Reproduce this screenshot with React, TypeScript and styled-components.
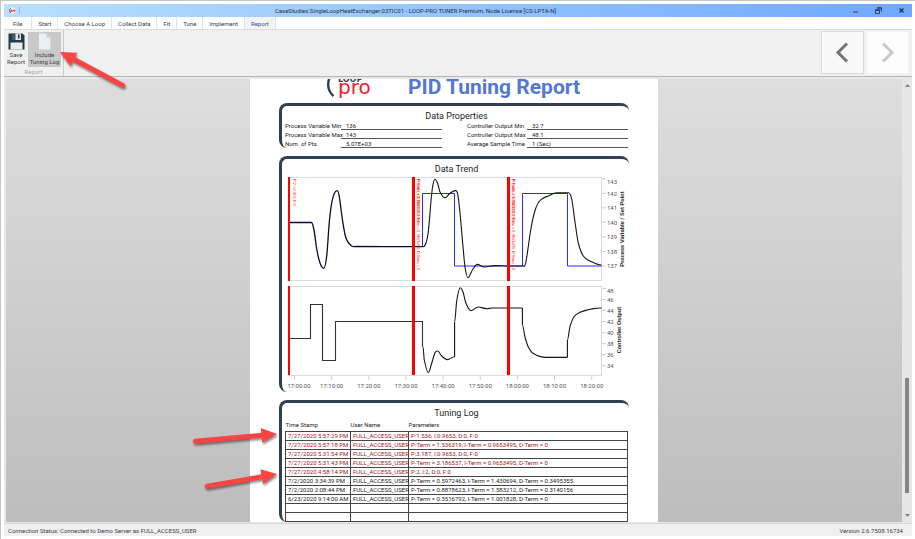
import React from "react";
import styled, { createGlobalStyle, css } from "styled-components";

const INK = "#333f52";
const RED = "#ff0000";

const GlobalStyle = createGlobalStyle`
  * { box-sizing: border-box; }
  body {
    margin: 0;
    background: #ffffff;
    color: #3c3c3c;
    font: 6px/7px Roboto, "Noto Sans", sans-serif;
  }
  button {
    margin: 0;
    padding: 0;
    border: 0;
    background: none;
    color: inherit;
    font: inherit;
  }
  svg { display: block; }
`;

const Desktop = styled.div`
  height: 100vh;
  padding: 3px;
  border-top: 1px solid #c6c6c6;
  border-left: 1px solid #c6c6c6;
`;

const AppWindow = styled.div`
  display: flex;
  flex-direction: column;
  height: 100%;
  overflow: hidden;
`;

const TitleBar = styled.header`
  display: flex;
  align-items: center;
  flex: none;
  height: 13px;
  padding: 0 5px;
  background: linear-gradient(90deg, #b9dffc, #6fa8ff);
`;

const TitleIcon = styled.span`
  padding-right: 3px;
  border-right: 1px solid #9fb9d0;
`;

const TitleText = styled.h1`
  flex: 1;
  margin: 0;
  font-size: 6px;
  font-weight: 400;
  line-height: 12px;
  text-align: center;
  color: #26303c;
`;

const WindowButtons = styled.div`
  display: flex;
  justify-content: flex-end;
  gap: 11px;
  width: 96px;
`;

const WindowButton = styled.button`
  width: 12px;
  height: 12px;
  display: grid;
  place-items: center;
`;

const TabBar = styled.nav`
  display: flex;
  flex: none;
  height: 12px;
  background: #ffffff;
`;

const Tab = styled.button<{ $active?: boolean; $first?: boolean }>`
  height: 12px;
  padding: 0 6px;
  border-right: 1px solid #e3e3e3;
  ${(p) => p.$first && css`padding: 0 9px;`}
  ${(p) => p.$active && css`background: #f3f3f3; color: #2b579a;`}
`;

const Ribbon = styled.section`
  position: relative;
  z-index: 2;
  display: flex;
  justify-content: space-between;
  flex: none;
  height: 48px;
  border-top: 1px solid #dcdcdc;
  border-bottom: 1px solid #b3b8b6;
  background: #f0f0f0;
`;

const RibbonGroup = styled.div`
  position: relative;
  padding: 2px 2px 0 2px;
  border-right: 1px solid #c9c9c9;
`;

const RibbonButtons = styled.div`
  display: flex;
  gap: 2px;
`;

const RibbonButton = styled.button<{ $pressed?: boolean }>`
  display: flex;
  flex-direction: column;
  align-items: center;
  gap: 1px;
  width: ${(p) => (p.$pressed ? 33 : 20)}px;
  height: 35px;
  padding-top: 1px;
  background: ${(p) => (p.$pressed ? "#c9c9c9" : "transparent")};
  white-space: nowrap;
`;

const GroupLabel = styled.div`
  padding-top: 1px;
  text-align: center;
  color: #a6a6a6;
`;

const NavButtons = styled.div`
  display: flex;
  gap: 2px;
  padding: 1px 3px 0 0;
`;

const NavButton = styled.button`
  display: grid;
  place-items: center;
  width: 43px;
  height: 43px;
  border: 1px solid #dadada;
  background: #f9f9f9;
  color: #747474;
  &:disabled {
    border-color: #f4f4f4;
    background: #fdfdfd;
    color: #c9c9c9;
  }
`;

const Viewer = styled.main`
  display: flex;
  flex: 1;
  min-height: 0;
  padding: 2px 0 1px 2px;
  background: #e8e8e8;
`;

const Canvas = styled.div`
  display: flex;
  justify-content: center;
  align-items: flex-start;
  flex: 1;
  height: 100%;
  overflow: hidden;
  background: linear-gradient(#dedede, #bdbdbd);
`;

const ScrollBar = styled.div`
  display: flex;
  flex-direction: column;
  align-items: center;
  width: 10px;
  padding: 5px 0;
  background: #e6e6e6;
`;

const ScrollTrack = styled.div`
  display: flex;
  flex-direction: column;
  justify-content: flex-end;
  flex: 1;
  padding-bottom: 21px;
`;

const ScrollThumb = styled.div`
  width: 4px;
  height: 115px;
  background: #868686;
`;

const StatusBar = styled.footer`
  display: flex;
  justify-content: space-between;
  align-items: center;
  flex: none;
  height: 13px;
  padding: 0 9px 0 4px;
  border-top: 1px solid #d6d6d6;
  background: #f0f0f0;
`;

const Paper = styled.article`
  flex: 0 1 408px;
  min-height: 100%;
  padding: 0 29px;
  background: #ffffff;
  color: #1c1c1c;
`;

const ReportHeader = styled.div`
  display: flex;
  align-items: flex-end;
  gap: 32px;
  height: 24px;
  padding-left: 47px;
  overflow: hidden;
`;

const ReportTitle = styled.h2`
  margin: 0;
  font-size: 21px;
  font-weight: 700;
  line-height: 32px;
  white-space: nowrap;
  color: #5377d3;
`;

const LogoTop = styled.text`
  font: 700 8px "DejaVu Sans", sans-serif;
  fill: ${INK};
`;

const LogoBottom = styled.text`
  font: 20px "DejaVu Sans", sans-serif;
  fill: #f2202c;
`;

const Card = styled.section`
  position: relative;
  margin-bottom: 8px;
  padding: 4px 1px 0 3px;
  border: 0 solid ${INK};
  border-width: 3px 0 0 3px;
  border-radius: 8px;
`;

const CardTitle = styled.h3`
  margin: 0;
  font-size: 9px;
  font-weight: 400;
  line-height: 12px;
  text-align: center;
`;

const PropertyColumns = styled.div`
  display: flex;
  justify-content: space-between;
`;

const PropertyList = styled.dl<{ $label: number }>`
  display: grid;
  grid-template-columns: ${(p) => p.$label}px 101px;
  row-gap: 1px;
  margin: 0;
`;

const PropertyName = styled.dt`
  line-height: 8px;
  white-space: nowrap;
`;

const PropertyValue = styled.dd`
  margin: 0;
  padding-left: 5px;
  border-bottom: 1px solid #555555;
  line-height: 7px;
`;

const LogTable = styled.table`
  width: 100%;
  border-collapse: collapse;
  table-layout: fixed;
  col:nth-child(1) { width: 65px; }
  col:nth-child(2) { width: 58px; }
`;

const HeadCell = styled.th`
  height: 12px;
  padding: 2px 0;
  font-weight: 400;
  line-height: 7px;
  text-align: left;
`;

const LogRow = styled.tr<{ $recent?: boolean }>`
  height: 9px;
  color: ${(p) => (p.$recent ? "#a3161b" : "#1c1c1c")};
`;

const LogCell = styled.td`
  padding: 0 0 0 2px;
  border: 1px solid #444444;
  line-height: 8px;
  white-space: nowrap;
`;

const Pointer = styled.svg<{ $left: number; $top: number }>`
  position: absolute;
  left: ${(p) => p.$left}px;
  top: ${(p) => p.$top}px;
  overflow: visible;
  pointer-events: none;
  filter: drop-shadow(1px 2px 1px rgba(0, 0, 0, 0.45));
`;

const AxisText = styled.text`
  font-size: 6px;
  fill: #555555;
`;

const AxisTitle = styled.text`
  font-size: 6px;
  font-weight: 700;
  text-anchor: middle;
  fill: #333333;
`;

const MarkerText = styled.text`
  font-size: 4px;
  fill: ${RED};
`;

type Point = [number, number];

/* Monotone cubic curve through the samples. */
function spline(points: Point[]): string {
  let d = `M${points[0][0]} ${points[0][1]}`;
  for (let i = 0; i < points.length - 1; i++) {
    const a = points[Math.max(0, i - 1)];
    const b = points[i];
    const c = points[i + 1];
    const e = points[Math.min(points.length - 1, i + 2)];
    const h = c[0] - b[0];
    const slope = (p: Point, q: Point) => (q[0] === p[0] ? 0 : (q[1] - p[1]) / (q[0] - p[0]));
    const flat = (p: number, q: number) => p * q <= 0;
    const s = slope(b, c);
    const m0 = flat(slope(a, b), s) ? 0 : slope(a, c);
    const m1 = flat(s, slope(c, e)) ? 0 : slope(b, e);
    d += `C${b[0] + h / 3} ${b[1] + (m0 * h) / 3} ${c[0] - h / 3} ${c[1] - (m1 * h) / 3} ${c[0]} ${c[1]}`;
  }
  return d;
}

const pvManual: Point[] = [
  [289, 222.5], [311.5, 222.5], [314, 230], [316.7, 249], [320, 263], [323.7, 268.3], [326.7, 256],
  [329.3, 222], [331.7, 203], [334.3, 193.5], [337.3, 190.7], [339.3, 196.7], [342.7, 221.7],
  [346, 238.3], [351.7, 246], [356, 246.5], [411, 246.6],
];
const pvAuto: Point[] = [
  [411, 246.6], [423.5, 246.6], [426, 243], [428.3, 232], [431, 201], [432.7, 186], [435, 179.3], [437.7, 183.5],
  [440, 192], [445, 197.8], [450, 193.3], [455.3, 190.6], [457.7, 194], [460, 213], [463, 246.7],
  [465, 267], [467.8, 277.7], [472.7, 269.5], [477.3, 264.4], [484, 267], [495, 265.6], [509, 266],
  [522.7, 266], [525.7, 263], [530.7, 230], [535, 210.5], [540, 200.5], [548.3, 196], [556.7, 192.8],
  [568.5, 192.8], [571.7, 199], [575, 222], [578.3, 243], [583.3, 256], [590, 261], [601.5, 265],
];
const coFirst: Point[] = [
  [423, 347], [424.3, 360], [428.3, 372.7], [431.7, 363.3], [435, 352.8], [437.7, 351], [441.7, 356],
  [447.5, 359.6], [454.5, 356.7],
];
const coSecond: Point[] = [
  [454.6, 322], [456.7, 301], [460.2, 287.7], [463, 292], [466, 303.3], [470.7, 310.7], [478.3, 307],
  [487, 308.7], [492, 308], [522.3, 308],
];
const coThird: Point[] = [
  [522.4, 325], [525, 337], [528.3, 347], [533.3, 353.5], [546, 357.4], [567.3, 357.4],
];
const coFourth: Point[] = [
  [567.4, 340], [570, 326.7], [574, 316.7], [580, 312.3], [593.3, 308.6], [601.5, 308],
];

const bars = [
  { x: 288, w: 2 },
  { x: 412, w: 3 },
  { x: 507, w: 3 },
];
const pvTicks = [143, 142, 141, 140, 139, 138, 137];
const coTicks = [48, 46, 44, 42, 40, 38, 36, 34];
const times = ["17:00:00", "17:10:00", "17:20:00", "17:30:00", "17:40:00", "17:50:00", "18:00:00", "18:10:00", "18:20:00"];

const markers = [
  { x: 293, text: "P:2, I:2, D:0, F:0" },
  { x: 417, text: "P-Term = 3.186537, I-Term = 0.9653495, D-Term = 0" },
  { x: 417, text: "P:3.187, I:0.9653, D:0, F:0" },
  { x: 512, text: "P-Term = 1.536319, I-Term = 0.9653495, D-Term = 0" },
  { x: 512, text: "P:1.536, I:0.9653, D:0, F:0" },
];

function TrendChart() {
  return (
    <svg viewBox="285 175 343 217" width="100%" role="img" aria-label="Data trend">
      <g fill="#ffffff" stroke="#dcdcdc">
        <rect x="288.5" y="177.5" width="313" height="103" />
        <rect x="288.5" y="286.5" width="313" height="89" />
      </g>
      <path d="M422.5 246.6V193.5H454.5V266H522.5V193.5H567.5V266H601.5" fill="none" stroke="#2a2aff" />
      <g fill="none" stroke="#151515" strokeWidth="1.1">
        <path d={spline(pvManual)} stroke="#0a0a38" strokeWidth="1.3" />
        <path d={spline(pvAuto)} />
        <path d="M289 338.5H310.5V304.5H322.5V360.5H335.5V321.5H422.5V347" stroke="#333333" />
        <path d={spline(coFirst)} />
        <path d="M454.6 357V322" />
        <path d={spline(coSecond)} />
        <path d="M522.4 308V325" />
        <path d={spline(coThird)} />
        <path d="M567.4 357.4V340" />
        <path d={spline(coFourth)} />
      </g>
      <g fill={RED}>
        {bars.map((b) => (
          <React.Fragment key={b.x}>
            <rect x={b.x} y="177" width={b.w} height="104" />
            <rect x={b.x} y="286" width={b.w} height="89" />
          </React.Fragment>
        ))}
      </g>
      {markers.map((m) => (
        <MarkerText key={m.text} transform={`translate(${m.x} 179) rotate(90)`}>{m.text}</MarkerText>
      ))}
      {pvTicks.map((v, i) => {
        const y = i === 0 ? 178.7 : 193.3 + (i - 1) * 14.55;
        return (
          <g key={v}>
            <path d={`M602 ${y}h4`} stroke="#cfcfcf" />
            <AxisText x="607" y={i === 0 ? 184 : y + 2.2}>{v}</AxisText>
          </g>
        );
      })}
      {coTicks.map((v, i) => {
        const y = 288.4 + i * 11.05;
        return (
          <g key={v}>
            <path d={`M602 ${y}h4`} stroke="#cfcfcf" />
            <AxisText x="607" y={i === 0 ? 292.8 : y + 2.4}>{v}</AxisText>
          </g>
        );
      })}
      {times.map((t, i) => {
        const x = 294.5 + i * 37.15;
        return (
          <g key={t}>
            <path d={`M${x} 376v4`} stroke="#cfcfcf" />
            <AxisText x={i === 0 ? 299 : x} y="388" textAnchor="middle">{t}</AxisText>
          </g>
        );
      })}
      <AxisTitle transform="translate(624 229) rotate(-90)">Process Variable / Set Point</AxisTitle>
      <AxisTitle transform="translate(621 330) rotate(-90)">Controller Output</AxisTitle>
    </svg>
  );
}

function Arrow({ left, top, length, angle }: { left: number; top: number; length: number; angle: number }) {
  return (
    <Pointer $left={left} $top={top} width="1" height="1" aria-hidden="true">
      <g transform={`rotate(${angle})`} fill="#fb4444">
        <path d="M0 0L-15.5 -7.5V7.5Z" />
        <path d={`M-14 0H${3 - length}`} stroke="#fb4444" strokeWidth="5" strokeLinecap="round" />
      </g>
    </Pointer>
  );
}

const tabs = ["File", "Start", "Choose A Loop", "Collect Data", "Fit", "Tune", "Implement", "Report"];

const leftProps = [["Process Variable Min", "136"], ["Process Variable Max", "143"], ["Num. of Pts.", "5.07E+03"]];
const rightProps = [["Controller Output Min", "32.7"], ["Controller Output Max", "48.1"], ["Average Sample Time", "1 (Sec)"]];

const log = [
  { time: "7/27/2020 5:57:29 PM", params: "P:1.536, I:0.9653, D:0, F:0", recent: true },
  { time: "7/27/2020 5:57:18 PM", params: "P-Term = 1.536319, I-Term = 0.9653495, D-Term = 0", recent: true },
  { time: "7/27/2020 5:31:54 PM", params: "P:3.187, I:0.9653, D:0, F:0", recent: true },
  { time: "7/27/2020 5:31:43 PM", params: "P-Term = 3.186537, I-Term = 0.9653495, D-Term = 0", recent: true },
  { time: "7/27/2020 4:58:14 PM", params: "P:2, I:2, D:0, F:0", recent: true },
  { time: "7/2/2020 3:34:39 PM", params: "P-Term = 0.5972463, I-Term = 1.430694, D-Term = 0.3495355", recent: false },
  { time: "7/2/2020 2:08:44 PM", params: "P-Term = 0.8878623, I-Term = 1.583212, D-Term = 0.3140156", recent: false },
  { time: "6/23/2020 9:14:00 AM", params: "P-Term = 0.3516792, I-Term = 1.001828, D-Term = 0", recent: false },
];

function PropertyBlock({ rows, label }: { rows: string[][]; label: number }) {
  return (
    <PropertyList $label={label}>
      {rows.map(([name, value]) => (
        <React.Fragment key={name}>
          <PropertyName>{name}</PropertyName>
          <PropertyValue>{value}</PropertyValue>
        </React.Fragment>
      ))}
    </PropertyList>
  );
}

export default function App() {
  return (
    <Desktop>
      <GlobalStyle />
      <AppWindow>
        <TitleBar>
          <TitleIcon>
            <svg width="7" height="7" viewBox="0 0 7 7">
              <circle cx="3.5" cy="3.5" r="3.3" fill="#f6eef4" />
              <path d="M1.8 6A3 3 0 0 1 1.8 1.2" fill="none" stroke="#444b63" strokeWidth="0.9" />
              <path d="M2 5V3.2H3.2V4.2H2M4.2 4.4V3.2H6V4.2H5" fill="none" stroke="#e8232f" strokeWidth="0.9" />
            </svg>
          </TitleIcon>
          <TitleText>CaseStudies.SingleLoopHeatExchanger.03TIC01 - LOOP-PRO TUNER Premium, Node License [CS-LPTA-N]</TitleText>
          <WindowButtons>
            <WindowButton aria-label="Minimize">
              <svg width="7" height="7" viewBox="0 0 7 7"><path d="M1 5h5" stroke="#4c6288" strokeWidth="1.5" /></svg>
            </WindowButton>
            <WindowButton aria-label="Restore">
              <svg width="7" height="7" viewBox="0 0 7 7" fill="none" stroke="#2e405c">
                <path d="M0.5 3.5h4v3h-4z" />
                <path d="M0 3h5M2 1h5M6.5 1v3.5" strokeWidth="1.3" />
              </svg>
            </WindowButton>
            <WindowButton aria-label="Close">
              <svg width="7" height="7" viewBox="0 0 7 7"><path d="M1.5 1.5l4 4M5.5 1.5l-4 4" stroke="#22324a" strokeWidth="1.4" /></svg>
            </WindowButton>
          </WindowButtons>
        </TitleBar>
        <TabBar>
          {tabs.map((t) => (
            <Tab key={t} $first={t === "File"} $active={t === "Report"}>{t}</Tab>
          ))}
        </TabBar>
        <Ribbon>
          <RibbonGroup>
            <RibbonButtons>
              <RibbonButton>
                <svg width="17" height="17" viewBox="0 0 17 17">
                  <path d="M0.5 0.5H14.5L16.5 2.5V16.5H0.5Z" fill="#263b49" />
                  <path d="M7 0.5H13V7H7Z" fill="#e3e6e8" />
                  <path d="M4 0.5H7.5V7H4Z" fill="#40586a" />
                  <path d="M10 1.5H11.6V5.6H10Z" fill="#263b49" />
                  <path d="M2.5 9.5H14.5V16.5H2.5Z" fill="#e9edf0" />
                </svg>
                <span>Save<br />Report</span>
              </RibbonButton>
              <RibbonButton $pressed aria-pressed="true">
                <svg width="17" height="17" viewBox="0 0 17 17">
                  <path d="M3 0.5H10.5L14.5 4.5V16.5H3Z" fill="#e9eff2" />
                  <path d="M10.5 0.5L14.5 4.5H10.5Z" fill="#c3d0d6" />
                </svg>
                <span>Include<br />Tuning Log</span>
              </RibbonButton>
            </RibbonButtons>
            <GroupLabel>Report</GroupLabel>
            <Arrow left={56} top={22} length={74} angle={208} />
          </RibbonGroup>
          <NavButtons>
            <NavButton aria-label="Previous">
              <svg width="21" height="21" viewBox="0 0 21 21"><path d="M15 1.5L6 10.5L15 19.5" fill="none" stroke="currentColor" strokeWidth="3" /></svg>
            </NavButton>
            <NavButton aria-label="Next" disabled>
              <svg width="21" height="21" viewBox="0 0 21 21"><path d="M6 1.5L15 10.5L6 19.5" fill="none" stroke="currentColor" strokeWidth="3" /></svg>
            </NavButton>
          </NavButtons>
        </Ribbon>
        <Viewer>
          <Canvas>
            <Paper>
              <ReportHeader>
                <svg width="50" height="24" viewBox="0 0 50 24">
                  <path d="M4 -3C1 5 1.5 12 7.5 17" fill="none" stroke={INK} strokeWidth="2.4" />
                  <LogoTop x="12" y="3">LOOP</LogoTop>
                  <LogoBottom x="12" y="15">pro</LogoBottom>
                </svg>
                <ReportTitle>PID Tuning Report</ReportTitle>
              </ReportHeader>
              <Card>
                <CardTitle>Data Properties</CardTitle>
                <PropertyColumns>
                  <PropertyBlock rows={leftProps} label={56} />
                  <PropertyBlock rows={rightProps} label={60} />
                </PropertyColumns>
              </Card>
              <Card>
                <CardTitle>Data Trend</CardTitle>
                <TrendChart />
              </Card>
              <Card>
                <CardTitle>Tuning Log</CardTitle>
                <LogTable>
                  <colgroup><col /><col /><col /></colgroup>
                  <thead>
                    <tr>
                      <HeadCell>Time Stamp</HeadCell>
                      <HeadCell>User Name</HeadCell>
                      <HeadCell>Parameters</HeadCell>
                    </tr>
                  </thead>
                  <tbody>
                    {log.map((r) => (
                      <LogRow key={r.time} $recent={r.recent}>
                        <LogCell>{r.time}</LogCell>
                        <LogCell>FULL_ACCESS_USER</LogCell>
                        <LogCell>{r.params}</LogCell>
                      </LogRow>
                    ))}
                    <LogRow><LogCell /><LogCell /><LogCell /></LogRow>
                    <LogRow><LogCell /><LogCell /><LogCell /></LogRow>
                  </tbody>
                </LogTable>
                <Arrow left={-5} top={31} length={85} angle={-5} />
                <Arrow left={-5} top={71} length={74} angle={-10} />
              </Card>
            </Paper>
          </Canvas>
          <ScrollBar>
            <svg width="5" height="3" viewBox="0 0 5 3"><path d="M0 3L2.5 0L5 3Z" fill="#868686" /></svg>
            <ScrollTrack><ScrollThumb /></ScrollTrack>
            <svg width="5" height="3" viewBox="0 0 5 3"><path d="M0 0L2.5 3L5 0Z" fill="#868686" /></svg>
          </ScrollBar>
        </Viewer>
        <StatusBar>
          <span>Connection Status: Connected to Demo Server as FULL_ACCESS_USER</span>
          <span>Version 2.6.7508.16734</span>
        </StatusBar>
      </AppWindow>
    </Desktop>
  );
}
